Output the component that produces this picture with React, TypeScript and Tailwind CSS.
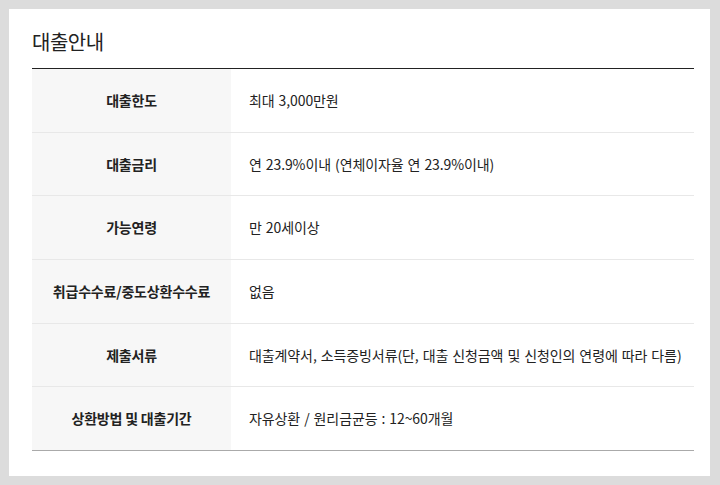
const rows = [
  { label: "대출한도", value: "최대 3,000만원" },
  { label: "대출금리", value: "연 23.9%이내 (연체이자율 연 23.9%이내)" },
  { label: "가능연령", value: "만 20세이상" },
  { label: "취급수수료/중도상환수수료", value: "없음" },
  { label: "제출서류", value: "대출계약서, 소득증빙서류(단, 대출 신청금액 및 신청인의 연령에 따라 다름)" },
  { label: "상환방법 및 대출기간", value: "자유상환 / 원리금균등 : 12~60개월" },
];

export default function App() {
  return (
    <div className="w-[720px] h-[485px] bg-[#dcdcdc] pt-[9px] pl-[9px] pr-[10px] pb-[9px] font-['Noto_Sans_CJK_KR','Noto_Sans',sans-serif] text-[#222]">
      <div className="h-full bg-white pl-[23px] pr-[16px] pt-[18px]">
        <h2 className="text-[20px] leading-[30px] font-normal tracking-[-0.5px] mb-[11px]">대출안내</h2>

        {/* Loan info table */}
        <div className="border-t border-[#222]">
          {rows.map((row, i) => (
            <div
              key={row.label}
              className={
                i === rows.length - 1
                  ? "flex h-[63.7px] border-b border-[#aaaaaa]"
                  : "flex h-[63.7px] border-b border-[#e8e8e8]"
              }
            >
              <div className="w-[199px] shrink-0 bg-[#f7f7f7] flex items-center justify-center text-[14px] font-bold tracking-[-0.2px]">
                {row.label}
              </div>
              <div className="flex items-center pl-[18px] text-[14px] tracking-[-0.1px] [word-spacing:1px]">
                {row.value}
              </div>
            </div>
          ))}
        </div>
      </div>
    </div>
  );
}
